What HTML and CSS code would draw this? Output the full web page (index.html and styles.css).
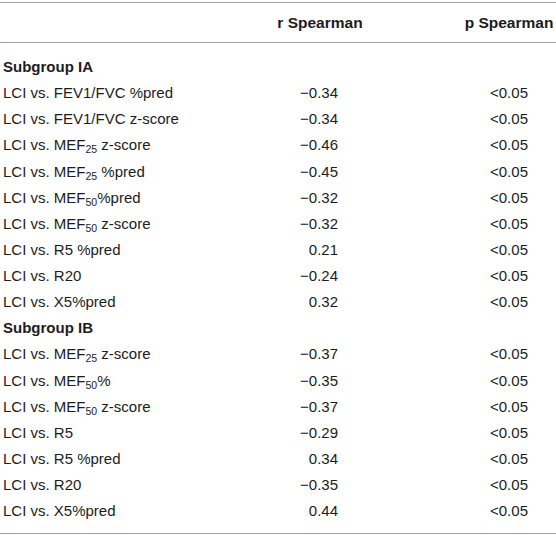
FILE: index.html
```html
<!DOCTYPE html>
<html>
<head>
<meta charset="utf-8">
<link rel="stylesheet" href="styles.css">
</head>
<body>
<table class="tbl">
  <thead>
    <tr>
      <th class="c1"></th>
      <th class="c2">r Spearman</th>
      <th class="c3">p Spearman</th>
    </tr>
  </thead>
  <tbody>
    <tr class="first"><td class="c1 grp">Subgroup IA</td><td class="c2"></td><td class="c3"></td></tr>
    <tr><td class="c1">LCI vs. FEV1/FVC %pred</td><td class="c2"><span class="v">−0.34</span></td><td class="c3">&lt;0.05</td></tr>
    <tr><td class="c1">LCI vs. FEV1/FVC z-score</td><td class="c2"><span class="v">−0.34</span></td><td class="c3">&lt;0.05</td></tr>
    <tr><td class="c1">LCI vs. MEF<sub>25</sub> z-score</td><td class="c2"><span class="v">−0.46</span></td><td class="c3">&lt;0.05</td></tr>
    <tr><td class="c1">LCI vs. MEF<sub>25</sub> %pred</td><td class="c2"><span class="v">−0.45</span></td><td class="c3">&lt;0.05</td></tr>
    <tr><td class="c1">LCI vs. MEF<sub>50</sub>%pred</td><td class="c2"><span class="v">−0.32</span></td><td class="c3">&lt;0.05</td></tr>
    <tr><td class="c1">LCI vs. MEF<sub>50</sub> z-score</td><td class="c2"><span class="v">−0.32</span></td><td class="c3">&lt;0.05</td></tr>
    <tr><td class="c1">LCI vs. R5 %pred</td><td class="c2"><span class="v">0.21</span></td><td class="c3">&lt;0.05</td></tr>
    <tr><td class="c1">LCI vs. R20</td><td class="c2"><span class="v">−0.24</span></td><td class="c3">&lt;0.05</td></tr>
    <tr><td class="c1">LCI vs. X5%pred</td><td class="c2"><span class="v">0.32</span></td><td class="c3">&lt;0.05</td></tr>
    <tr><td class="c1 grp">Subgroup IB</td><td class="c2"></td><td class="c3"></td></tr>
    <tr><td class="c1">LCI vs. MEF<sub>25</sub> z-score</td><td class="c2"><span class="v">−0.37</span></td><td class="c3">&lt;0.05</td></tr>
    <tr><td class="c1">LCI vs. MEF<sub>50</sub>%</td><td class="c2"><span class="v">−0.35</span></td><td class="c3">&lt;0.05</td></tr>
    <tr><td class="c1">LCI vs. MEF<sub>50</sub> z-score</td><td class="c2"><span class="v">−0.37</span></td><td class="c3">&lt;0.05</td></tr>
    <tr><td class="c1">LCI vs. R5</td><td class="c2"><span class="v">−0.29</span></td><td class="c3">&lt;0.05</td></tr>
    <tr><td class="c1">LCI vs. R5 %pred</td><td class="c2"><span class="v">0.34</span></td><td class="c3">&lt;0.05</td></tr>
    <tr><td class="c1">LCI vs. R20</td><td class="c2"><span class="v">−0.35</span></td><td class="c3">&lt;0.05</td></tr>
    <tr class="last"><td class="c1">LCI vs. X5%pred</td><td class="c2"><span class="v">0.44</span></td><td class="c3">&lt;0.05</td></tr>
  </tbody>
</table>
</body>
</html>
```
FILE: styles.css
```css
html, body {
  margin: 0;
  padding: 0;
  background: #fff;
}
body {
  font-family: "Liberation Sans", Arial, sans-serif;
  font-size: 15px;
  color: #1c1c1c;
}
.tbl {
  margin-top: 2px;
  width: 556px;
  border-collapse: collapse;
  border-top: 1px solid #a0a0a0;
  border-bottom: 1px solid #a0a0a0;
  table-layout: fixed;
}
.tbl thead tr {
  height: 40px;
  border-bottom: 1px solid #a0a0a0;
}
.tbl th {
  font-weight: bold;
  font-size: 15.5px;
  padding: 0;
  vertical-align: middle;
}
.tbl td {
  padding: 0;
  height: 26.125px;
  line-height: 16px;
  vertical-align: middle;
}
.tbl tr.first td {
  padding-top: 11px;
}
.tbl tr.last td {
  padding-bottom: 9px;
}
.tbl .c1 {
  text-align: left;
  padding-left: 3px;
  width: 223px;
}
.tbl .c2 {
  text-align: center;
  width: 188px;
}
.tbl td.c2 {
  padding-right: 6px;
}
.tbl .c3 {
  text-align: center;
  padding-left: 48px;
}
.grp {
  font-weight: bold;
}
.v {
  display: inline-block;
  min-width: 42px;
  text-align: right;
}
sub {
  font-size: 10.5px;
  line-height: 0;
  vertical-align: -3px;
}
```
